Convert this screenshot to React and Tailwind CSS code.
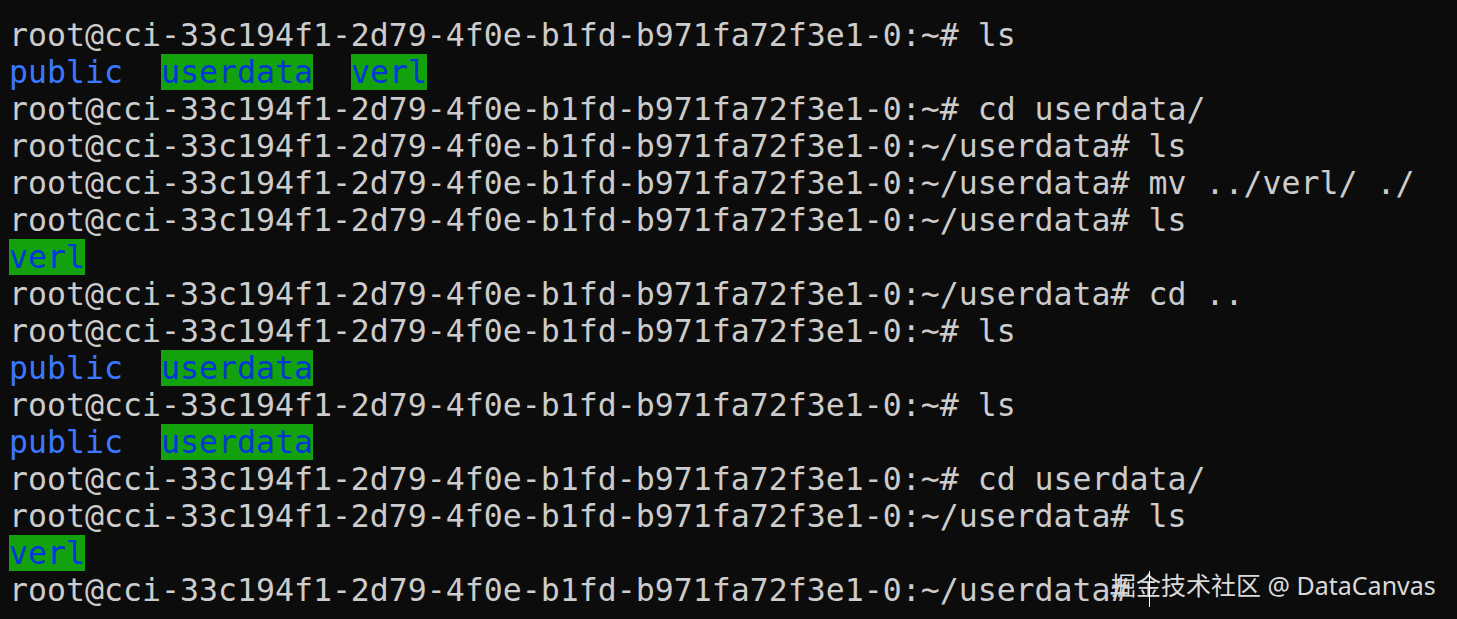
import React from 'react';

const PROMPT = 'root@cci-33c194f1-2d79-4f0e-b1fd-b971fa72f3e1-0:';

const lines = [
  { p: '~', cmd: 'ls' },
  { out: [['public', 'pub'], ['  '], ['userdata', 'dir'], ['  '], ['verl', 'dir']] },
  { p: '~', cmd: 'cd userdata/' },
  { p: '~/userdata', cmd: 'ls' },
  { p: '~/userdata', cmd: 'mv ../verl/ ./' },
  { p: '~/userdata', cmd: 'ls' },
  { out: [['verl', 'dir']] },
  { p: '~/userdata', cmd: 'cd ..' },
  { p: '~', cmd: 'ls' },
  { out: [['public', 'pub'], ['  '], ['userdata', 'dir']] },
  { p: '~', cmd: 'ls' },
  { out: [['public', 'pub'], ['  '], ['userdata', 'dir']] },
  { p: '~', cmd: 'cd userdata/' },
  { p: '~/userdata', cmd: 'ls' },
  { out: [['verl', 'dir']] },
  { p: '~/userdata', cmd: null },
];

const Chunk = ({ text, kind }) => {
  if (kind === 'pub') return <span className="text-[#3b78ff]">{text}</span>;
  if (kind === 'dir') return <span className="bg-[#13a10e] text-[#0037da]">{text}</span>;
  return <span>{text}</span>;
};

export default function App() {
  return (
    <div className="relative w-[1457px] h-[619px] overflow-hidden bg-[#0c0c0c] text-[#cccccc]">
      <div className="pl-[9px] pt-[17px] font-['DejaVu_Sans_Mono',monospace] text-[31.56px] leading-[37px] whitespace-pre">
        {lines.map((l, i) => (
          <div key={i} className="h-[37px]">
            {l.out
              ? l.out.map(([t, k], j) => <Chunk key={j} text={t} kind={k} />)
              : `${PROMPT}${l.p}#${l.cmd ? ' ' + l.cmd : ''}`}
          </div>
        ))}
      </div>

      {/* watermark */}
      <div className="absolute left-[1111px] top-[567px] text-[25px] leading-[36px] text-[#dadada] font-['Noto_Sans','Noto_Sans_CJK_SC',sans-serif] whitespace-nowrap">
        掘金技术社区 @ DataCanvas
      </div>
      <div className="absolute left-[1149px] top-[571px] w-px h-[36px] bg-white" />
    </div>
  );
}
